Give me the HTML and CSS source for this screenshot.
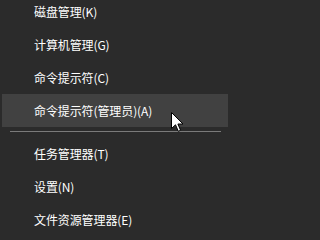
FILE: index.html
```html
<!DOCTYPE html>
<html lang="zh-CN">
<head>
<meta charset="utf-8">
<link rel="stylesheet" href="styles.css">
</head>
<body>
<div class="menu">
  <div class="item">磁盘管理(K)</div>
  <div class="item">计算机管理(G)</div>
  <div class="item">命令提示符(C)</div>
  <div class="item hover">命令提示符(管理员)(A)
    <svg class="cursor" width="13" height="21" viewBox="0 0 13 21"><path d="M0.5 0.5 V16.5 L4.5 12.8 L7.3 19.3 L9.6 18.3 L6.9 12 H12 Z" fill="#fff" stroke="#000" stroke-width="1" stroke-linejoin="miter"/></svg>
  </div>
  <div class="sep"></div>
  <div class="item">任务管理器(T)</div>
  <div class="item">设置(N)</div>
  <div class="item">文件资源管理器(E)</div>
</div>
</body>
</html>
```
FILE: styles.css
```css
html, body {
  margin: 0;
  padding: 0;
  background: #2b2b2b;
  overflow: hidden;
}
.menu {
  width: 228px;
  margin-top: -5px;
  display: flex;
  flex-direction: column;
  font-family: "Noto Sans CJK SC", "Noto Sans", sans-serif;
  font-size: 12px;
  letter-spacing: -0.1px;
  color: #ffffff;
}
.item {
  position: relative;
  height: 33px;
  line-height: 33px;
  margin-left: 2px;
  padding-left: 32px;
  white-space: nowrap;
}
.hover {
  background: #414141;
}
.sep {
  height: 1px;
  margin: 4px 7px 5px 10px;
  background: #7a7a7a;
}
.cursor {
  position: absolute;
  left: 169px;
  top: 18px;
}
```
